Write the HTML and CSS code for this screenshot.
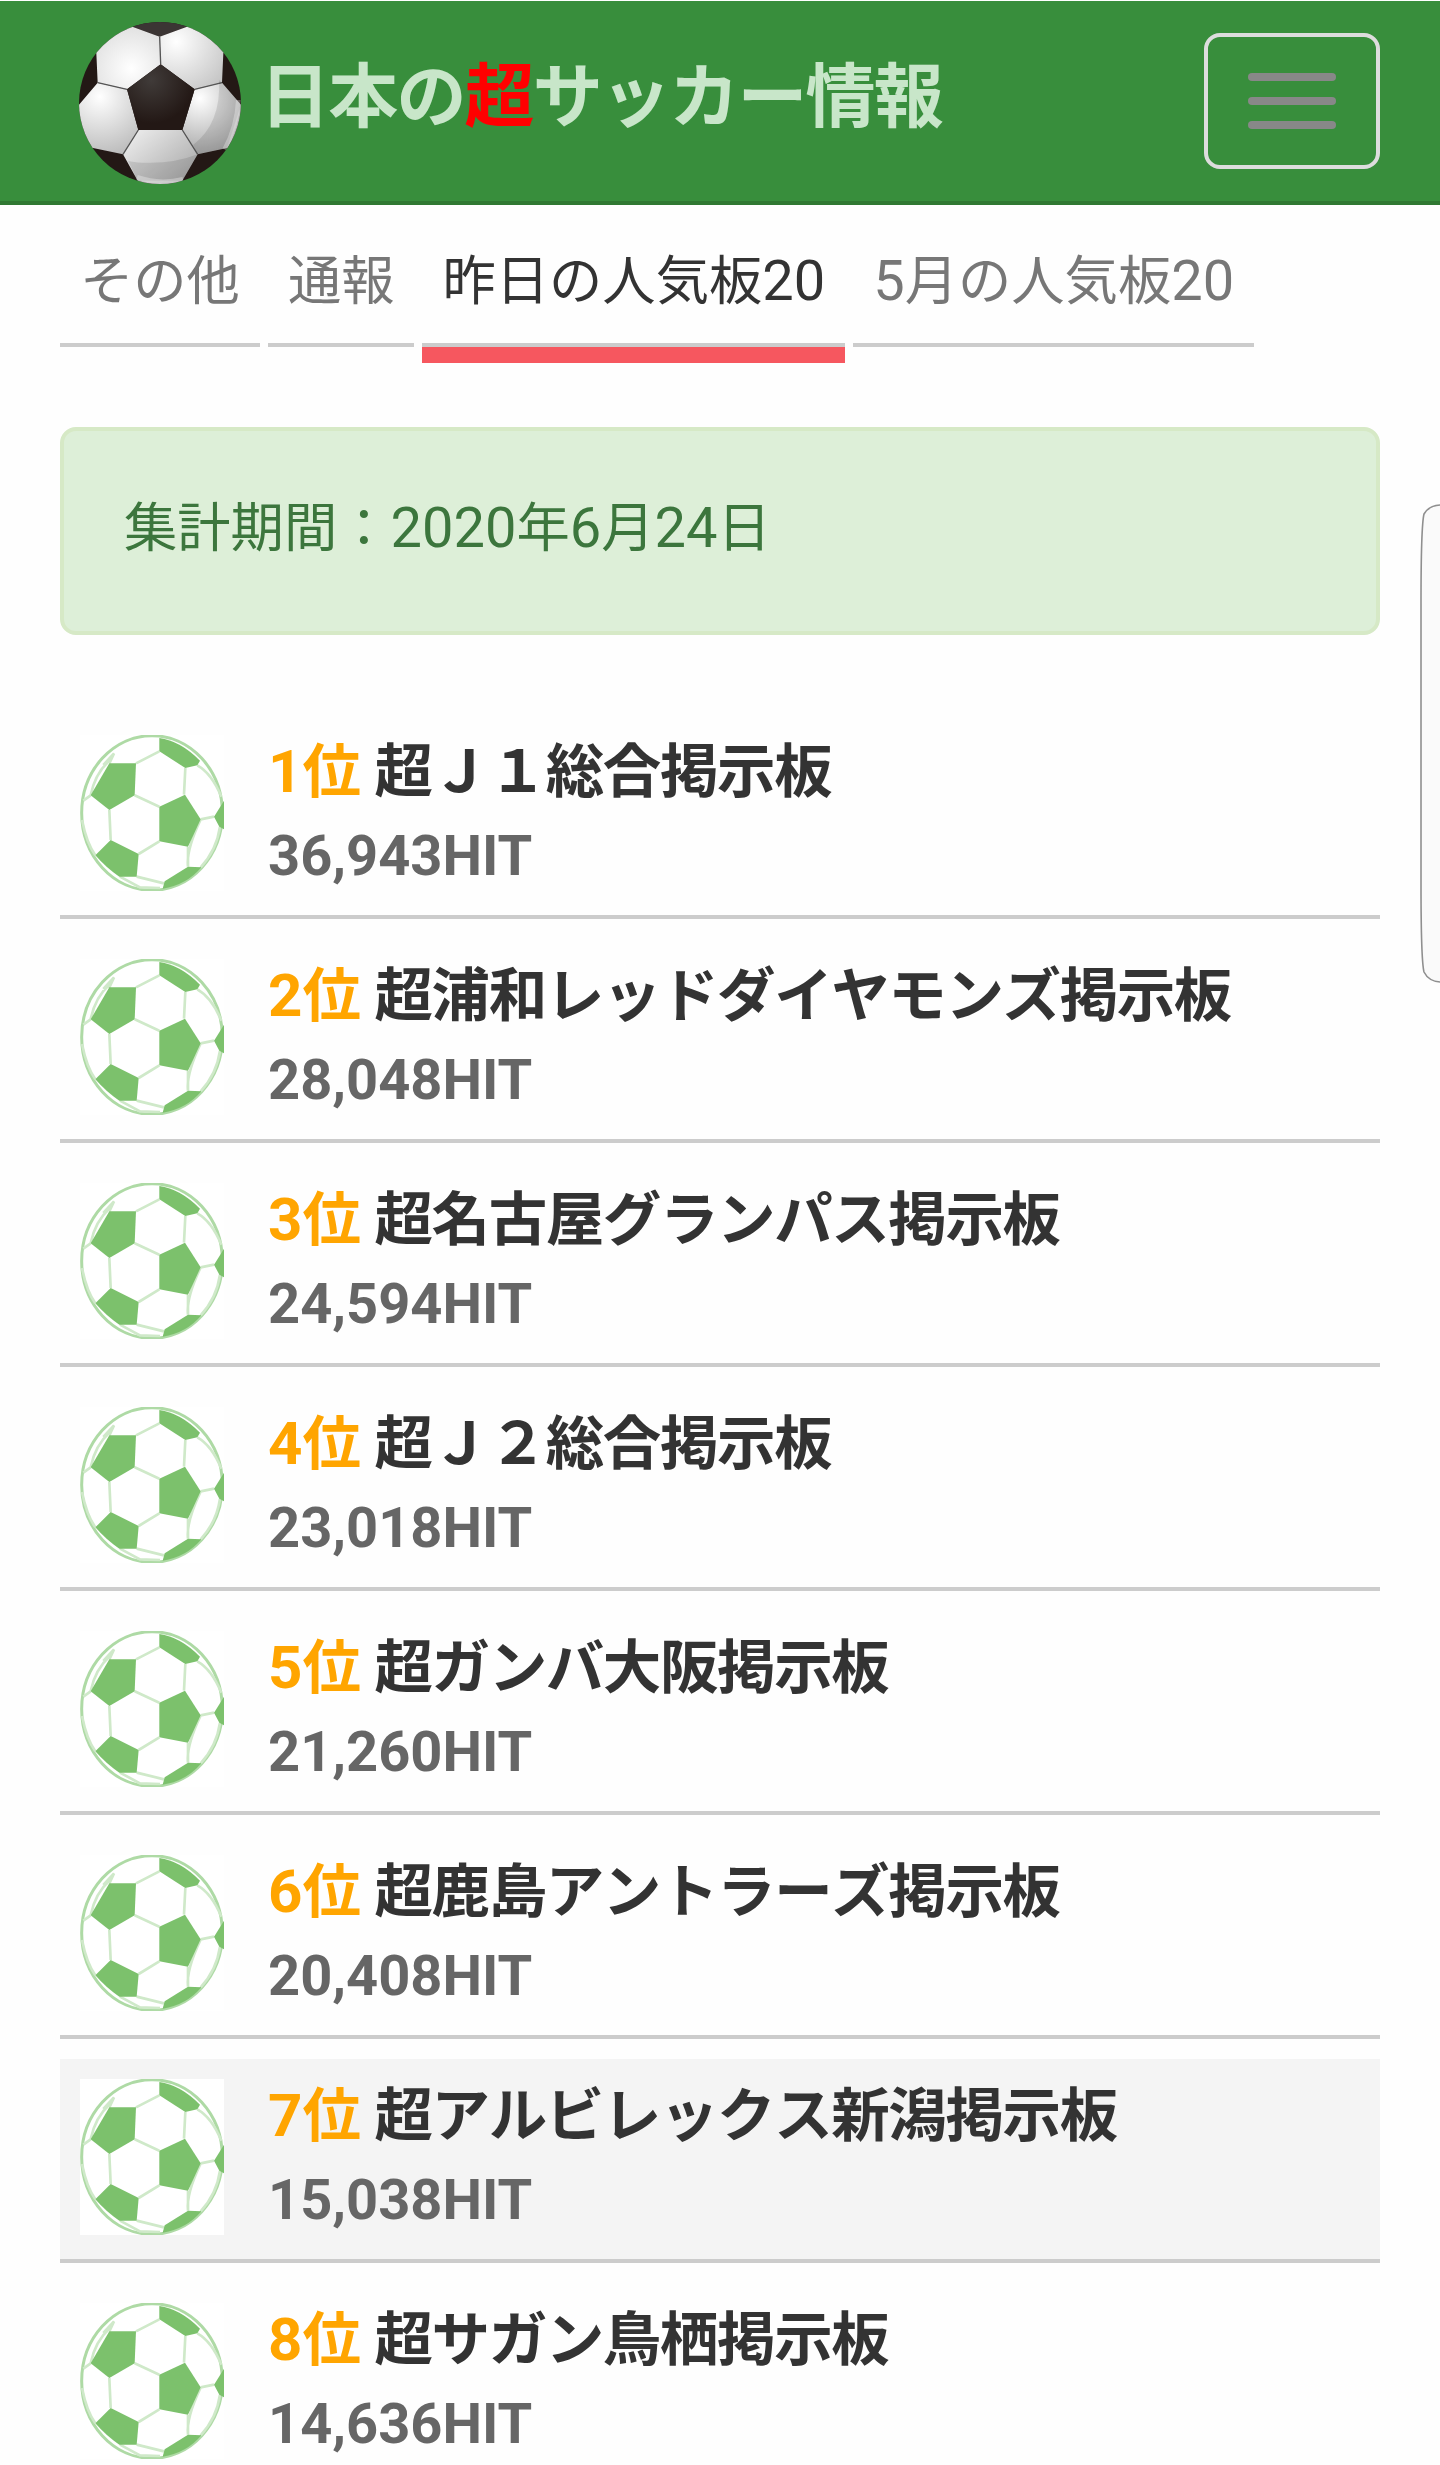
FILE: index.html
```html
<!DOCTYPE html>
<html lang="ja">

<head>
    <meta charset="UTF-8">
    <meta name="viewport" content="width=device-width, initial-scale=1.0">
    <title>日本の超サッカー情報</title>
    <link rel="stylesheet" href="styles.css">
</head>

<body>
    <!-- Green ball shared by every ranking row -->
    <svg class="defs" width="0" height="0">
        <symbol id="ball" viewBox="60 75 432 468" preserveAspectRatio="none">
            <rect x="60" y="75" width="432" height="468" fill="#fff" />
            <ellipse cx="276" cy="309" rx="211" ry="232" fill="none" stroke="#aedaa5" stroke-width="9" />
            <g fill="none" stroke="#cfe9c9" stroke-width="8">
                <path d="M228 160L298 124M376 174L372 254M224 256L298 290M148 300L152 390M236 432L298 394M384 410L384 470M422 328L462 320M92 256L70 272M106 436Q80 400 66 330M148 160L162 130L130 165M412 166Q455 190 484 260M92 256Q105 190 150 150M384 470Q378 420 422 328M230 500L312 520M180 500L240 532L300 534M422 472Q470 420 480 350" />
            </g>
            <g fill="#7cc16c">
                <path d="M148 160L228 160L224 256L148 300L92 256Z" />
                <path d="M298 84Q360 92 420 152L412 166L376 174L298 124Z" />
                <path d="M375 254L422 328L384 410L298 394L298 290Z" />
                <path d="M152 390L236 432L230 500L178 500Q140 475 106 436Z" />
                <path d="M384 470L424 472Q380 525 308 536L314 514Z" />
                <path d="M492 272L462 320L478 350L492 358Z" />
            </g>
        </symbol>
    </svg>

    <header class="navbar">
        <a class="brand" href="#">
            <svg class="logo" viewBox="238 66 486 486">
                <defs>
                    <clipPath id="round">
                        <circle cx="481" cy="309" r="243" />
                    </clipPath>
                    <radialGradient id="g1" gradientUnits="userSpaceOnUse" cx="395" cy="205" r="150">
                        <stop offset="0" stop-color="#fff" />
                        <stop offset="1" stop-color="#dcdcdc" />
                    </radialGradient>
                    <radialGradient id="g2" gradientUnits="userSpaceOnUse" cx="530" cy="125" r="180">
                        <stop offset="0" stop-color="#fff" />
                        <stop offset="1" stop-color="#c4c4c4" />
                    </radialGradient>
                    <radialGradient id="g3" gradientUnits="userSpaceOnUse" cx="300" cy="290" r="190">
                        <stop offset="0" stop-color="#fff" />
                        <stop offset="1" stop-color="#b8b8b8" />
                    </radialGradient>
                    <radialGradient id="g4" gradientUnits="userSpaceOnUse" cx="600" cy="295" r="170">
                        <stop offset="0" stop-color="#fff" />
                        <stop offset="1" stop-color="#a8a8a8" />
                    </radialGradient>
                    <linearGradient id="g5" x1="0" y1="0" x2="1" y2="1">
                        <stop offset="0" stop-color="#f2f2f2" />
                        <stop offset="1" stop-color="#9c9c9c" />
                    </linearGradient>
                    <radialGradient id="g6" gradientUnits="userSpaceOnUse" cx="455" cy="240" r="130">
                        <stop offset="0" stop-color="#403b39" />
                        <stop offset="1" stop-color="#231815" />
                    </radialGradient>
                </defs>
                <g clip-path="url(#round)">
                    <rect x="238" y="66" width="486" height="486" fill="#231815" />
                    <path fill="#3b3534" d="M398 80L480 110L562 80L520 60L440 60Z" />
                    <g stroke="#555" stroke-width="4" stroke-linejoin="round">
                        <path fill="url(#g1)" d="M380 40L398 80L480 110L483 193L382 268L294 248L290 160L240 120Z" stroke="none" />
                        <path fill="url(#g2)" d="M590 40L562 80L480 110L483 193L585 268L667 248L671 160L720 120Z" stroke="none" />
                        <path fill="url(#g3)" d="M294 248L382 268L416 390L370 463L280 444L200 460L200 350L238 314Z" stroke="none" />
                        <path fill="url(#g4)" d="M667 248L585 268L548 390L594 463L682 444L760 460L760 350L724 314Z" stroke="none" />
                        <path fill="url(#g5)" d="M416 390L548 390L594 463L548 542L560 580L400 580L414 542L370 463Z" stroke="none" />
                        <path fill="none" d="M480 110L483 193M382 268L294 248M585 268L667 248M416 390L370 463M548 390L594 463" />
                    </g>
                    <path fill="url(#g6)" d="M483 193L585 268L548 390L416 390L382 268Z" />
                    <!-- shade on the lower right -->
                    <path fill="#000" fill-opacity=".1" d="M658 240Q665 370 580 435L594 463Q520 492 430 488Q400 486 385 482L414 542L548 542L594 463L682 444L724 314L667 248Z" />
                    <path fill="none" stroke="#fff" stroke-opacity=".3" stroke-width="14" d="M716 300Q712 380 675 448M550 538Q480 555 412 532" />
                </g>
            </svg>
            <span class="site-name">日本の<em>超</em>サッカー情報</span>
        </a>
        <button class="toggle" type="button" aria-label="menu">
            <span></span>
            <span></span>
            <span></span>
        </button>
    </header>

    <main class="container">
        <ul class="tabs">
            <li><span class="ja">その他</span></li>
            <li><span class="ja">通報</span></li>
            <li class="active"><span class="ja">昨日の人気板</span>20</li>
            <li>5<span class="ja">月の人気板</span>20</li>
        </ul>

        <div class="alert"><span class="ja">集計期間：</span>2020<span class="ja">年</span>6<span class="ja">月</span>24<span class="ja">日</span></div>

        <ul class="ranking">
            <li>
                <svg class="thumb"><use href="#ball" /></svg>
                <div>
                    <h2><span class="rank">1<span class="ja">位</span></span> <span class="ja">超Ｊ１総合掲示板</span></h2>
                    <p>36,943HIT</p>
                </div>
            </li>
            <li>
                <svg class="thumb"><use href="#ball" /></svg>
                <div>
                    <h2><span class="rank">2<span class="ja">位</span></span> <span class="ja">超浦和レッドダイヤモンズ掲示板</span></h2>
                    <p>28,048HIT</p>
                </div>
            </li>
            <li>
                <svg class="thumb"><use href="#ball" /></svg>
                <div>
                    <h2><span class="rank">3<span class="ja">位</span></span> <span class="ja">超名古屋グランパス掲示板</span></h2>
                    <p>24,594HIT</p>
                </div>
            </li>
            <li>
                <svg class="thumb"><use href="#ball" /></svg>
                <div>
                    <h2><span class="rank">4<span class="ja">位</span></span> <span class="ja">超Ｊ２総合掲示板</span></h2>
                    <p>23,018HIT</p>
                </div>
            </li>
            <li>
                <svg class="thumb"><use href="#ball" /></svg>
                <div>
                    <h2><span class="rank">5<span class="ja">位</span></span> <span class="ja">超ガンバ大阪掲示板</span></h2>
                    <p>21,260HIT</p>
                </div>
            </li>
            <li>
                <svg class="thumb"><use href="#ball" /></svg>
                <div>
                    <h2><span class="rank">6<span class="ja">位</span></span> <span class="ja">超鹿島アントラーズ掲示板</span></h2>
                    <p>20,408HIT</p>
                </div>
            </li>
            <li class="hover">
                <svg class="thumb"><use href="#ball" /></svg>
                <div>
                    <h2><span class="rank">7<span class="ja">位</span></span> <span class="ja">超アルビレックス新潟掲示板</span></h2>
                    <p>15,038HIT</p>
                </div>
            </li>
            <li>
                <svg class="thumb"><use href="#ball" /></svg>
                <div>
                    <h2><span class="rank">8<span class="ja">位</span></span> <span class="ja">超サガン鳥栖掲示板</span></h2>
                    <p>14,636HIT</p>
                </div>
            </li>
        </ul>
    </main>

    <!-- Edge panel handle -->
    <svg class="edge-handle" viewBox="0 0 20 480">
        <path d="M22 1Q9 1 4 10Q1 22 1 100V380Q1 456 4 468Q9 478 22 478" fill="#fafafa" stroke="#8f8f8f" stroke-width="1.6" />
    </svg>
</body>

</html>
```

FILE: styles.css
```css
* {
    box-sizing: border-box;
}

body {
    position: relative;
    margin: 0;
    height: 2465px;
    overflow: hidden;
    background: #fefefe;
    color: #333;
    font-family: Roboto, "Noto Sans CJK JP", sans-serif;
    font-size: 56px;
    line-height: 80px;
}

ul {
    margin: 0;
    padding: 0;
    list-style: none;
}

/* kanji and kana are set a little smaller than the digits */
.ja {
    font-family: "Noto Sans CJK JP", sans-serif;
    font-size: 0.952em;
    font-kerning: none;
    line-height: 1;
}

.defs {
    display: block;
}

.navbar {
    display: flex;
    justify-content: space-between;
    align-items: flex-start;
    height: 205px;
    padding: 21px 60px 0 79px;
    background: #388e3c;
    border-top: 1px solid #fff;
    border-bottom: 4px solid #307832;
}

.brand {
    display: flex;
    color: #c8e6c9;
    text-decoration: none;
}

.logo {
    width: 162px;
    height: 162px;
}

.site-name {
    margin-left: 19px;
    padding-top: 30px;
    font-family: "Noto Sans CJK JP", sans-serif;
    font-size: 70px;
    font-weight: bold;
    font-kerning: none;
    letter-spacing: -1.8px;
    line-height: 80px;
}

.site-name em {
    color: #f00;
    font-style: normal;
}

.toggle {
    display: flex;
    flex-direction: column;
    align-items: center;
    gap: 16px;
    width: 176px;
    height: 136px;
    margin-top: 11px;
    padding: 36px 0;
    background: none;
    border: 4px solid #ddd;
    border-radius: 16px;
}

.toggle span {
    width: 88px;
    height: 8px;
    background: #888;
    border-radius: 4px;
}

.container {
    padding: 0 60px;
}

.tabs {
    display: flex;
    gap: 8px;
    height: 158px;
    padding-top: 34px;
    color: #777;
}

.tabs li {
    height: 108px;
    padding: 2px 20px 0;
    border-bottom: 4px solid #ccc;
    white-space: nowrap;
}

.tabs .active {
    color: #333;
    box-shadow: 0 16px 0 #f6575f;
}

.alert {
    height: 208px;
    margin-top: 64px;
    padding: 57px 60px;
    background: #ddefd8;
    border: 4px solid #d6e9c6;
    border-radius: 16px;
    color: #3c763d;
}

.ranking {
    margin-top: 80px;
}

.ranking li {
    display: flex;
    gap: 44px;
    height: 204px;
    margin-bottom: 20px;
    padding: 20px 20px 0;
    border-bottom: 4px solid #ccc;
}

.ranking .hover {
    background: #f4f4f4;
}

.thumb {
    width: 144px;
    height: 156px;
}

h2 {
    margin: 0;
    font-size: 60px;
    font-weight: bold;
    line-height: 73px;
    white-space: nowrap;
}

h2 .ja {
    font-size: 58.5px;
    letter-spacing: -1.4px;
}

.rank {
    color: #ffa500;
}

p {
    margin: 8px 0 0;
    color: #666;
    font-weight: bold;
}

.edge-handle {
    position: absolute;
    top: 504px;
    right: 0;
    width: 20px;
    height: 480px;
}
```
